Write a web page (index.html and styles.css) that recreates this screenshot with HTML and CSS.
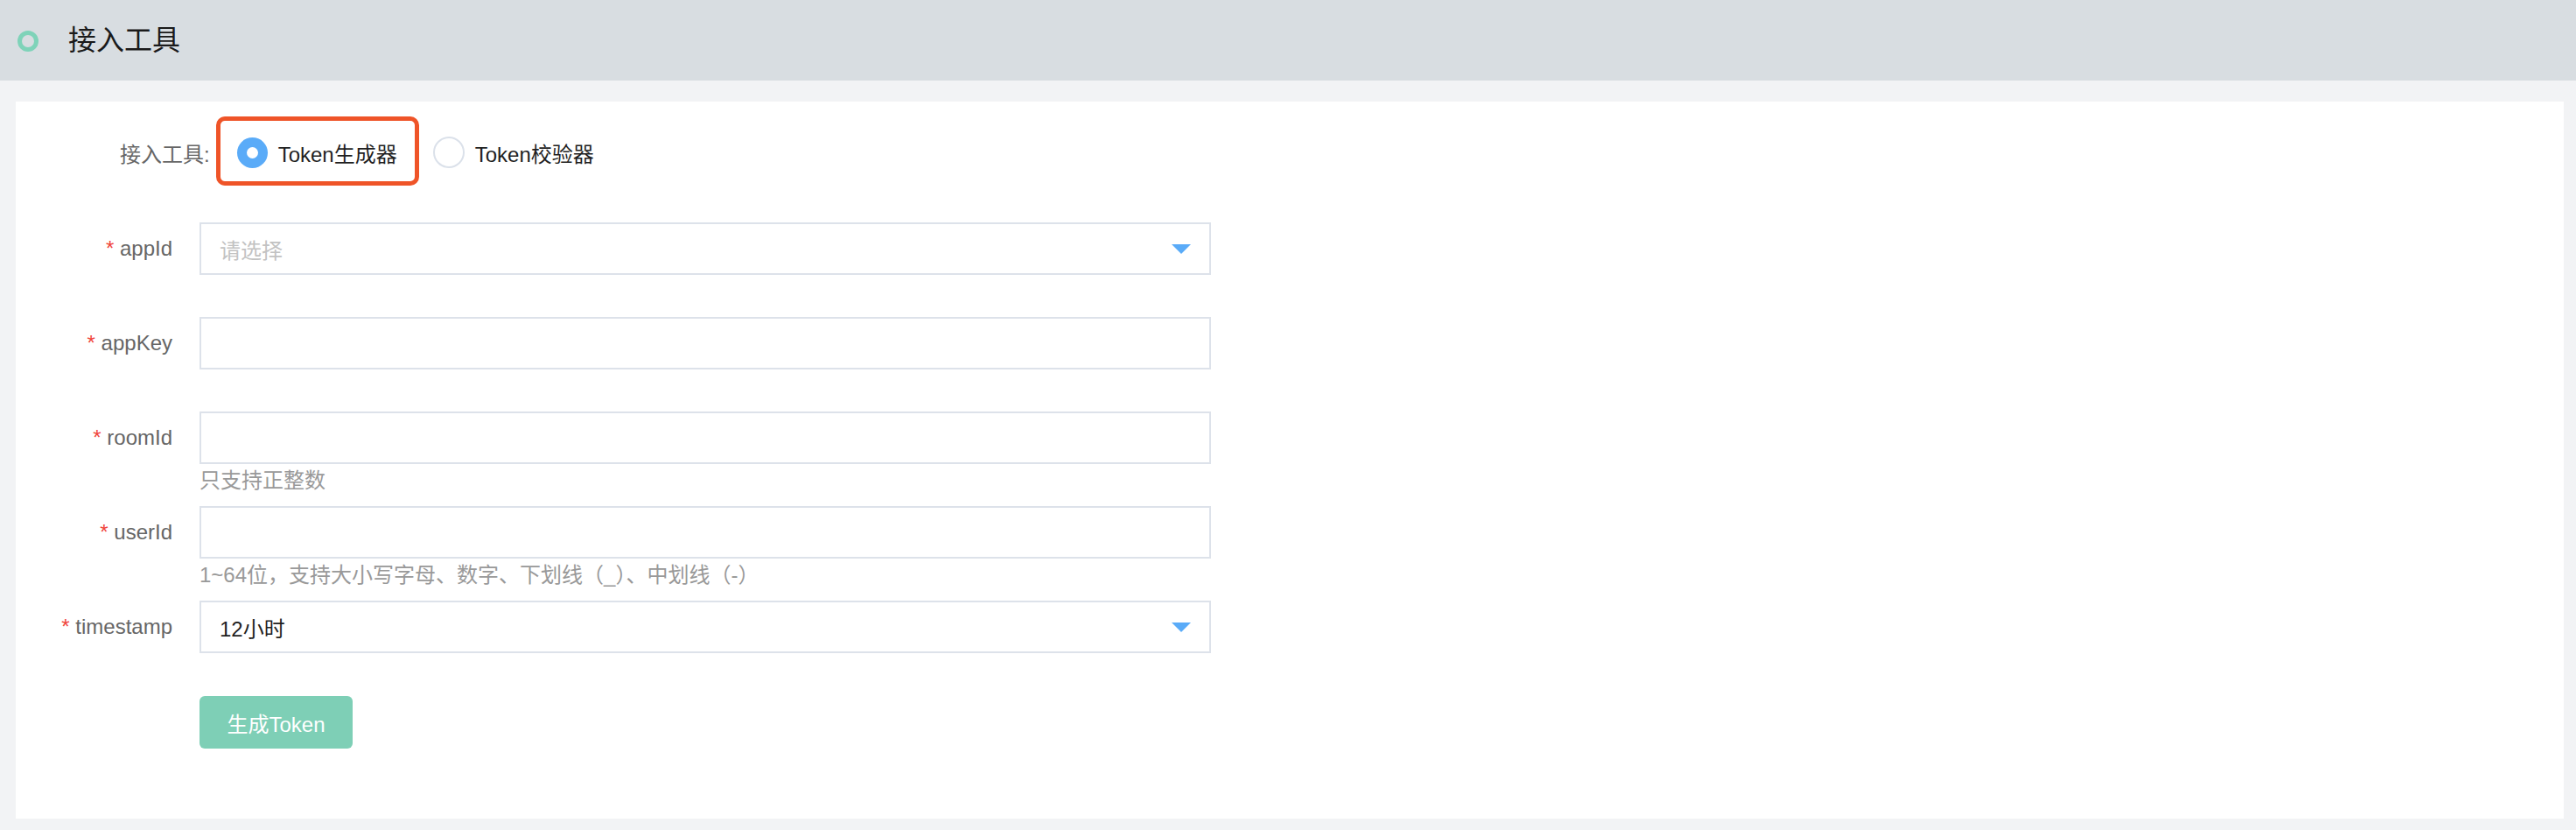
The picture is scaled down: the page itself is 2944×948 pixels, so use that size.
FILE: index.html
```html
<!DOCTYPE html>
<html lang="zh-CN">
<head>
<meta charset="utf-8">
<title>接入工具</title>
<link rel="stylesheet" href="styles.css">
</head>
<body>
<header class="header">
  <span class="ring"></span>
  <h1 class="title">接入工具</h1>
</header>
<main class="card">
  <div class="tool-row">
    <span class="tool-label">接入工具:</span>
    <div class="radio-group">
      <label class="radio radio-marked">
        <span class="radio-dot checked"></span>
        <span class="radio-text">Token生成器</span>
      </label>
      <label class="radio">
        <span class="radio-dot"></span>
        <span class="radio-text">Token校验器</span>
      </label>
    </div>
  </div>
  <form class="form">
    <div class="item">
      <div class="label"><span class="req">*</span> appId</div>
      <div class="control">
        <div class="select"><span class="placeholder">请选择</span><span class="arrow"></span></div>
      </div>
    </div>
    <div class="item">
      <div class="label"><span class="req">*</span> appKey</div>
      <div class="control"><div class="input"></div></div>
    </div>
    <div class="item">
      <div class="label"><span class="req">*</span> roomId</div>
      <div class="control">
        <div class="input"></div>
        <div class="hint">只支持正整数</div>
      </div>
    </div>
    <div class="item">
      <div class="label"><span class="req">*</span> userId</div>
      <div class="control">
        <div class="input"></div>
        <div class="hint">1~64位，支持大小写字母、数字、下划线（_）、中划线（-）</div>
      </div>
    </div>
    <div class="item">
      <div class="label"><span class="req">*</span> timestamp</div>
      <div class="control">
        <div class="select"><span class="value">12小时</span><span class="arrow"></span></div>
      </div>
    </div>
    <div class="item item-btn">
      <div class="label"></div>
      <div class="control"><button type="button" class="btn">生成Token</button></div>
    </div>
  </form>
</main>
</body>
</html>
```
FILE: styles.css
```css
* { box-sizing: border-box; }
html, body { margin: 0; padding: 0; }
body {
  background: #f2f3f5;
  font-family: "Liberation Sans", "Noto Sans CJK SC", sans-serif;
  width: 2944px;
  height: 948px;
  overflow: hidden;
}
.header {
  height: 92px;
  background: #d8dde1;
  display: flex;
  align-items: center;
  padding-left: 20px;
}
.ring {
  width: 24px;
  height: 24px;
  border: 5px solid #7fd3b9;
  border-radius: 50%;
  margin-right: 34px;
  margin-top: 2px;
}
.title {
  margin: 0;
  font-size: 32px;
  font-weight: normal;
  color: #1a1a1a;
  line-height: 1;
}
.card {
  margin: 24px 14px 14px 18px;
  background: #fff;
  padding: 18px 0 80px 0;
}
.tool-row {
  height: 80px;
  display: flex;
  align-items: center;
  padding-left: 119px;
  font-size: 24px;
}
.tool-label { color: #666; }
.radio-group {
  display: flex;
  align-items: center;
  margin-left: 31px;
  gap: 41px;
}
.radio {
  display: flex;
  align-items: center;
  gap: 12px;
  color: #1f1f1f;
  position: relative;
}
.radio-marked::before {
  content: "";
  position: absolute;
  left: -24px;
  right: -25px;
  top: -24px;
  bottom: -20px;
  border: 5px solid #ef5428;
  border-radius: 10px;
}
.radio-dot {
  width: 36px;
  height: 36px;
  border-radius: 50%;
  border: 2px solid #dbe1ea;
  background: #fff;
  display: flex;
  align-items: center;
  justify-content: center;
}
.radio-dot.checked {
  width: 35px;
  height: 35px;
  border: none;
  background: #5aabf8;
}
.radio-dot.checked::after {
  content: "";
  width: 13px;
  height: 13px;
  border-radius: 50%;
  background: #fff;
}
.form {
  margin-top: 40px;
}
.item {
  display: flex;
  height: 108px;
  font-size: 24px;
}
.item-btn { height: auto; padding-top: 1px; }
.label {
  width: 179px;
  text-align: right;
  line-height: 60px;
  color: #666;
  flex: none;
}
.req { color: #f0463c; }
.control {
  margin-left: 31px;
  width: 1156px;
}
.input, .select {
  height: 60px;
  border: 2px solid #dde2ea;
  background: #fff;
}
.select {
  display: flex;
  align-items: center;
  justify-content: space-between;
  padding: 0 21px 0 21px;
}
.placeholder { color: #c2c2c2; }
.value { color: #1f1f1f; }
.arrow {
  width: 0;
  height: 0;
  border-left: 11px solid transparent;
  border-right: 11px solid transparent;
  border-top: 11px solid #5aabf8;
}
.hint {
  line-height: 38px;
  color: #999;
  white-space: nowrap;
}
.btn {
  width: 175px;
  height: 60px;
  border: none;
  border-radius: 6px;
  background: #7ecfb6;
  color: #fff;
  font-family: inherit;
  font-size: 24px;
  padding: 0;
}
```
